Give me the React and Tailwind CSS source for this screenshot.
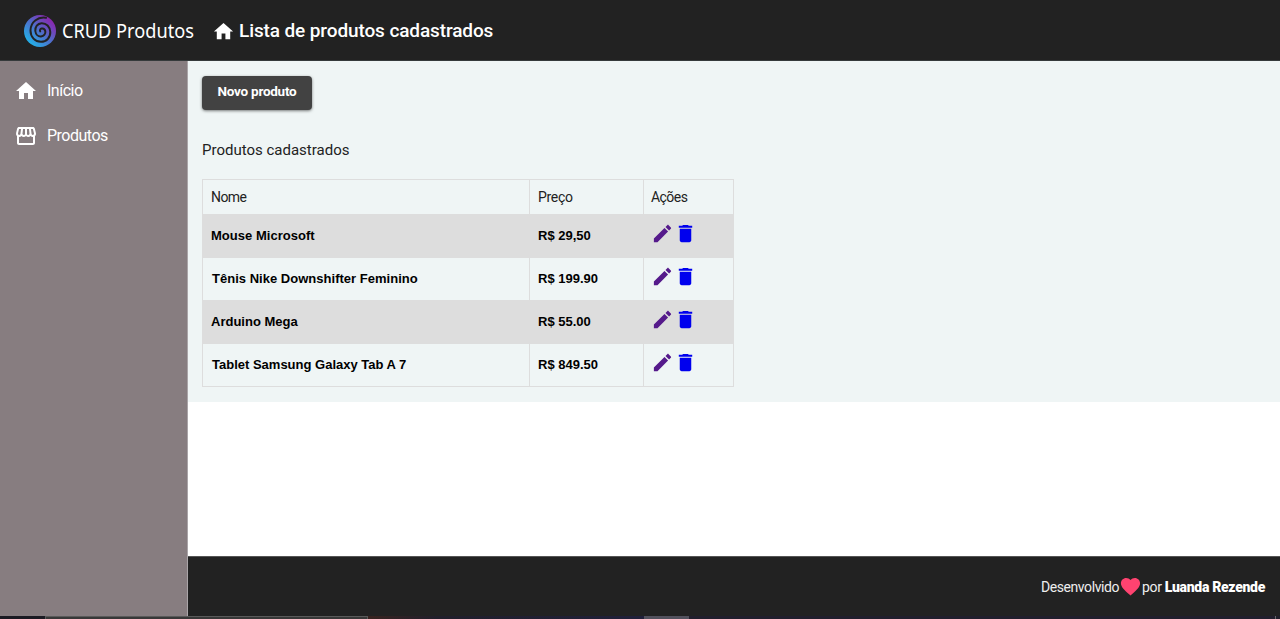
const products = [
  { name: 'Mouse Microsoft', price: 'R$ 29,50', nameClass: 'tracking-[0.03px]' },
  { name: 'Tênis Nike Downshifter Feminino', price: 'R$ 199.90', nameClass: 'pl-px tracking-[0.02px]' },
  { name: 'Arduino Mega', price: 'R$ 55.00', nameClass: '' },
  { name: 'Tablet Samsung Galaxy Tab A 7', price: 'R$ 849.50', nameClass: 'pl-px' },
];

const paths = {
  home: 'M10 20v-6h4v6h5v-8h3L12 3 2 12h3v8z',
  store:
    'M21.9 8.89l-1.05-4.37c-.22-.9-1-1.52-1.91-1.52H5.05c-.9 0-1.69.63-1.9 1.52L2.1 8.89c-.24 1.02-.02 2.06.62 2.88.08.11.19.19.28.29V19c0 1.1.9 2 2 2h14c1.1 0 2-.9 2-2v-6.94c.09-.09.2-.18.28-.28.64-.82.87-1.87.62-2.89zm-2.99-3.9l1.05 4.37c.1.42.01.84-.25 1.17-.14.18-.44.47-.94.47-.61 0-1.14-.49-1.21-1.14L16.98 5l1.93-.01zM13 5h1.96l.54 4.52c.05.39-.07.78-.33 1.07-.22.26-.54.41-.95.41-.67 0-1.22-.59-1.22-1.31V5zM8.49 9.52L9.04 5H11v4.69c0 .72-.55 1.31-1.29 1.31-.34 0-.65-.15-.89-.41-.25-.29-.37-.68-.33-1.07zm-4.45-.16L5.05 5h1.97l-.58 4.86c-.08.65-.6 1.14-1.21 1.14-.49 0-.8-.29-.93-.47-.27-.32-.36-.75-.26-1.17zM5 19v-6.03c.08.01.15.03.23.03.87 0 1.66-.36 2.24-.95.6.6 1.4.95 2.31.95.87 0 1.65-.36 2.23-.93.59.57 1.39.93 2.29.93.84 0 1.64-.35 2.24-.95.58.59 1.37.95 2.24.95.08 0 .15-.02.23-.03V19H5z',
  edit: 'M3 17.25V21h3.75L17.81 9.94l-3.75-3.75L3 17.25zM20.71 7.04c.39-.39.39-1.02 0-1.41l-2.34-2.34c-.39-.39-1.02-.39-1.41 0l-1.83 1.83 3.75 3.75 1.83-1.83z',
  trash: 'M6 19c0 1.1.9 2 2 2h8c1.1 0 2-.9 2-2V7H6v12zM19 4h-3.500l-1-1h-5l-1 1H5v2h14V4z',
  heart:
    'M12 21.35l-1.45-1.32C5.4 15.36 2 12.28 2 8.5 2 5.42 4.42 3 7.5 3c1.74 0 3.41.81 4.5 2.09C13.09 3.81 14.76 3 16.5 3 19.58 3 22 5.42 22 8.5c0 3.78-3.4 6.86-8.55 11.54L12 21.35z',
};

function Icon({ name, className }) {
  return (
    <svg viewBox="0 0 24 24" fill="currentColor" className={`shrink-0 ${className}`}>
      <path d={paths[name]} />
    </svg>
  );
}

function Logo() {
  return (
    <svg viewBox="0 0 32 32" className="relative top-px size-8 shrink-0">
      <defs>
        <linearGradient id="swirl" x1="0.15" y1="0.9" x2="0.85" y2="0.15">
          <stop offset="0" stopColor="#20b4ea" />
          <stop offset="0.5" stopColor="#4d70cb" />
          <stop offset="1" stopColor="#8a25ae" />
        </linearGradient>
      </defs>
      <circle cx="16" cy="16" r="16" fill="url(#swirl)" />
      <path
        d="M22 2.800C14 1.500 6.500 7 6.500 15.500C6.500 22 11 26.800 17 26.800C22.500 26.800 26.500 22.500 26.300 17C26 11.500 22.300 8 17.500 8.200C13.500 8.500 11 12 11.300 16C11.700 19.500 14.200 21.600 17 21.400C20 21.200 21.800 18.800 21.300 16.200C20.900 14.200 19.200 13.200 17.600 13.500C16.200 13.800 15.600 15.200 16.200 16.400"
        fill="none"
        stroke="#222"
        strokeWidth="2"
        strokeLinecap="round"
      />
    </svg>
  );
}

export default function App() {
  return (
    <div className="flex h-[619px] w-[1280px] flex-col overflow-hidden bg-white font-['Roboto',sans-serif]">
      <header className="flex h-[61px] shrink-0 items-center border-b border-[#353a3b] bg-[#222] pl-6 text-white">
        <Logo />
        <span className="ml-[6px] w-[132px] whitespace-nowrap pt-0.5 font-['Noto_Sans',sans-serif] text-[19px] leading-6">
          <span className="inline-block origin-left scale-x-[0.957]">CRUD Produtos</span>
        </span>
        <h1 className="ml-[17.5px] flex items-center gap-[4.5px] pt-0.5 text-[19px] font-medium leading-6 tracking-[-0.11px]">
          <Icon name="home" className="size-[23px]" />
          <span className="whitespace-nowrap">Lista de produtos cadastrados</span>
        </h1>
      </header>

      <div className="flex h-[555px] shrink-0">
        <nav className="flex w-[188px] shrink-0 flex-col border-r border-[#aaa5a8] bg-[#877d80] pt-[7px] text-base tracking-[-0.5px] text-white">
          <a className="flex h-[45px] items-center gap-[9px] pl-[14px]">
            <Icon name="home" className="size-[24px]" />
            Início
          </a>
          <a className="flex h-[45px] items-center gap-[9px] pl-[14px]">
            <Icon name="store" className="size-[24px]" />
            Produtos
          </a>
        </nav>

        <div className="flex flex-1 flex-col">
          <main className="h-[341px] bg-[#eff5f5] pl-[14px] pt-[15px]">
            <button className="flex h-[34px] w-[110px] items-center justify-center rounded bg-[#424242] pb-[3px] text-[13.5px] font-bold tracking-[-0.25px] text-white shadow-[0_1px_3px_rgba(0,0,0,0.5)]">
              Novo produto
            </button>
            <p className="mt-[28px] text-[15px] leading-6 text-[#222]">Produtos cadastrados</p>

            <table className="mt-[17px] w-[532px] table-fixed border-collapse font-['Liberation_Sans',sans-serif] text-[13px] text-black">
              <colgroup>
                <col className="w-[327px]" />
                <col className="w-[114px]" />
                <col className="w-[90px]" />
              </colgroup>
              <thead>
                <tr className="h-[35px] text-left font-['Roboto',sans-serif] text-[14px] tracking-[-0.55px] text-[#222]">
                  <th className="border border-[#ddd] px-2 py-0 font-normal">Nome</th>
                  <th className="border border-[#ddd] px-2 py-0 font-normal tracking-[-0.3px]">Preço</th>
                  <th className="border border-[#ddd] pl-[7px] py-0 font-normal">Ações</th>
                </tr>
              </thead>
              <tbody>
                {products.map((p) => (
                  <tr key={p.name} className="h-[43px] font-bold odd:bg-[#ddd]">
                    <td className="border border-[#ddd] px-2 py-0">
                      <span className={p.nameClass}>{p.name}</span>
                    </td>
                    <td className="border border-[#ddd] px-2 py-0">{p.price}</td>
                    <td className="border border-[#ddd] pl-[7px] py-0">
                      <div className="flex pb-[5px]">
                        <Icon name="edit" className="size-[23px] text-[#551a8b]" />
                        <Icon name="trash" className="size-[23px] text-[#0000ee]" />
                      </div>
                    </td>
                  </tr>
                ))}
              </tbody>
            </table>
          </main>

          <footer className="mt-auto flex h-[60px] items-center justify-end border-t border-[#555] bg-[#222] pr-[15px] text-sm text-white">
            <span className="tracking-[-0.42px] text-[#eee]">Desenvolvido</span>
            <Icon name="heart" className="size-[23px] text-[#ff4370]" />
            <span className="tracking-[-0.3px] text-[#eee]">por</span>
            <span className="ml-[3px] font-black tracking-[-0.3px]">Luanda Rezende</span>
          </footer>
        </div>
      </div>

      <div className="flex h-[3px] shrink-0 bg-[#211f2b]">
        <div className="w-[45px] bg-[#1b1b23]" />
        <div className="w-[323px] border-x border-t border-[#5a5a5a] bg-[#383838]" />
        <div className="w-[276px] bg-linear-to-r from-[#38231f] via-[#211f2b] via-25% to-[#20203a]" />
        <div className="w-[45px] bg-[#52515d]" />
        <div className="flex-1 bg-[#211f2d]" />
        <div className="mr-1 w-px bg-[#666]" />
      </div>
    </div>
  );
}
